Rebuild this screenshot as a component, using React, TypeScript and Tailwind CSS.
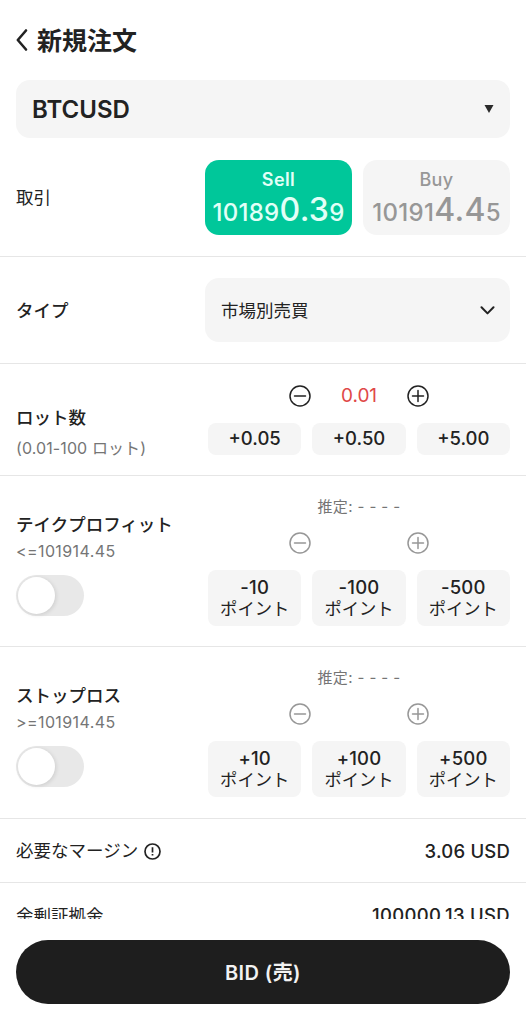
import React from "react";

const FONT = "font-[Inter,'Noto_Sans_CJK_JP',sans-serif]";

function CircleButton({ kind, muted = false }: { kind: "plus" | "minus"; muted?: boolean }) {
  return (
    <button className={muted ? "text-[#979797]" : "text-[#222]"} aria-label={kind}>
      <svg className="block" width="22" height="22" viewBox="0 0 22 22" fill="none" stroke="currentColor" strokeWidth="1.5" strokeLinecap="round">
        <circle cx="11" cy="11" r="10" />
        <path d={kind === "plus" ? "M5.5 11h11M11 5.5v11" : "M5.5 11h11"} />
      </svg>
    </button>
  );
}

function Stepper({ value, muted }: { value?: string; muted?: boolean }) {
  return (
    <div className="flex h-[22px] w-[140px] items-center justify-between">
      <CircleButton kind="minus" muted={muted} />
      <span className="pt-px text-[19px] text-[#e04848]">{value}</span>
      <CircleButton kind="plus" muted={muted} />
    </div>
  );
}

function PointSection({ title, limit, steps, size }: { title: string; limit: string; steps: string[]; size: string }) {
  return (
    <section className={`flex shrink-0 justify-between border-b border-[#e6e6e6] px-4 ${size}`}>
      <div className="pt-[36px]">
        <div className="text-[17.5px] leading-[26px] font-medium">{title}</div>
        <div className="text-[16px] leading-[26px] tracking-[0.4px] text-[#757575]">{limit}</div>
        <div className="mt-[11px] flex h-[41px] w-[68px] items-center rounded-full bg-[#e8e8e8] pl-[2px]">
          <div className="size-[37px] rounded-full bg-white shadow-[1px_1px_4px_rgba(0,0,0,0.12)]" />
        </div>
      </div>
      <div className="flex w-[302px] flex-col items-center pt-[20px]">
        <div className="text-[15px] leading-[22px] tracking-[0.4px] text-[#757575]">推定: - - - -</div>
        <div className="mt-[14px]">
          <Stepper muted />
        </div>
        <div className="mt-[16px] grid w-full grid-cols-3 gap-[11px]">
          {steps.map((s) => (
            <button key={s} className="flex h-[56px] flex-col items-center justify-center rounded-lg bg-[#f5f5f5] text-[18.5px] leading-[22px] font-medium tracking-[0.2px]">
              <span>{s}</span>
              <span className="text-[17.3px] font-normal tracking-normal">ポイント</span>
            </button>
          ))}
        </div>
      </div>
    </section>
  );
}

function Price({ head, big, tail }: { head: string; big: string; tail: string }) {
  return (
    <div className="flex items-baseline pt-px leading-[34px] tracking-[0.3px]">
      <span className="text-[24px]">{head}</span>
      <span className="text-[32px]">{big}</span>
      <span className="text-[24px]">{tail}</span>
    </div>
  );
}

export default function App() {
  return (
    <div className={`flex h-[1024px] w-[526px] flex-col overflow-hidden bg-white text-[#222] ${FONT}`}>
      <main className="flex h-[919px] shrink-0 flex-col overflow-hidden">
        <header className="flex h-[80px] shrink-0 items-center gap-[9px] pl-4">
          <svg width="12" height="24" viewBox="0 0 12 24" fill="none" stroke="currentColor" strokeWidth="2.6" strokeLinecap="round" strokeLinejoin="round">
            <path d="M10 2.5 1.8 12 10 21.5" />
          </svg>
          <h1 className="pt-[3px] text-[25px] font-bold">新規注文</h1>
        </header>

        <div className="mx-4 flex h-[58px] shrink-0 items-center justify-between rounded-[14px] bg-[#f5f5f5] pr-4 pl-4">
          <span className="pt-[2px] text-[24px] font-semibold">BTCUSD</span>
          <svg width="10" height="8" viewBox="0 0 10 8" fill="#2b2b2b">
            <path d="M.5 0h9L5 8z" />
          </svg>
        </div>

        <section className="flex h-[119px] shrink-0 items-center justify-between border-b border-[#e6e6e6] px-4">
          <div className="pt-[2px] text-[17.5px]">取引</div>
          <div className="flex gap-[11px]">
            <button className="flex h-[75px] w-[147px] flex-col items-center rounded-[14px] bg-[#00c79a] pt-[8px] font-medium text-[#e2fff7]">
              <span className="text-[18px] leading-[24px] font-semibold tracking-[0.4px]">Sell</span>
              <Price head="10189" big="0.3" tail="9" />
            </button>
            <button className="flex h-[75px] w-[147px] flex-col items-center rounded-[14px] bg-[#f5f5f5] pt-[8px] font-medium text-[#979797]">
              <span className="text-[18px] leading-[24px] tracking-[0.4px]">Buy</span>
              <Price head="10191" big="4.4" tail="5" />
            </button>
          </div>
        </section>

        <section className="flex h-[107px] shrink-0 items-center justify-between border-b border-[#e6e6e6] px-4">
          <div className="pt-[2px] text-[17.5px] font-medium">タイプ</div>
          <button className="flex h-[64px] w-[305px] items-center justify-between rounded-[14px] bg-[#f5f5f5] pr-[15px] pl-4">
            <span className="pt-[2px] text-[17.5px]">市場別売買</span>
            <svg width="15" height="9" viewBox="0 0 15 9" fill="none" stroke="currentColor" strokeWidth="2" strokeLinecap="round" strokeLinejoin="round">
              <path d="M1.5 1.2 7.5 7.4 13.5 1.2" />
            </svg>
          </button>
        </section>

        <section className="flex h-[112px] shrink-0 justify-between border-b border-[#e6e6e6] px-4">
          <div className="pt-[41px]">
            <div className="text-[17.5px] leading-[26px] font-medium">ロット数</div>
            <div className="mt-[4px] text-[16px] leading-[26px] tracking-[0.1px] text-[#757575]">(0.01-100 ロット)</div>
          </div>
          <div className="flex w-[302px] flex-col items-center pt-[21px]">
            <Stepper value="0.01" />
            <div className="mt-[16px] grid w-full grid-cols-3 gap-[11px]">
              {["+0.05", "+0.50", "+5.00"].map((s) => (
                <button key={s} className="h-[32px] rounded-lg bg-[#f5f5f5] text-[18.5px] font-medium">{s}</button>
              ))}
            </div>
          </div>
        </section>

        <PointSection size="h-[171px]" title="テイクプロフィット" limit="<=101914.45" steps={["-10", "-100", "-500"]} />
        <PointSection size="h-[172px]" title="ストップロス" limit=">=101914.45" steps={["+10", "+100", "+500"]} />

        <section className="flex h-[64px] shrink-0 items-center justify-between border-b border-[#e6e6e6] px-4">
          <div className="flex items-center gap-[6px] pt-[2px] text-[17.5px]">
            必要なマージン
            <svg width="17" height="17" viewBox="0 0 17 17" fill="none" stroke="currentColor" strokeWidth="1.7">
              <circle cx="8.5" cy="8.5" r="7.5" />
              <path d="M8.5 4.3v5.2M8.5 11v1.6" />
            </svg>
          </div>
          <div className="pt-[2px] text-[18.5px] font-medium tracking-[0.2px]">3.06 USD</div>
        </section>

        <section className="flex h-[64px] shrink-0 items-center justify-between px-4">
          <div className="pt-[2px] text-[17.5px]">余剰証拠金</div>
          <div className="pt-[2px] text-[18.5px] font-medium tracking-[0.3px]">100000.13 USD</div>
        </section>
      </main>

      <footer className="flex h-[105px] shrink-0 bg-white px-4 pt-[21px]">
        <button className="h-[64px] w-full rounded-full bg-[#1e1e1e] pt-[2px] text-[20px] font-semibold tracking-[0.4px] text-[#f2f2f2]">BID (売)</button>
      </footer>
    </div>
  );
}
